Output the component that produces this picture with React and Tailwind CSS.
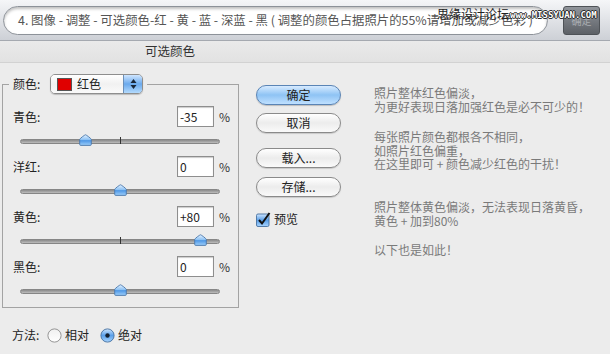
import React from "react";

const F = "font-['Noto_Sans_CJK_SC','Noto_Sans',sans-serif]";

function Thumb({ left }) {
  return (
    <svg
      className="absolute top-[-1px]"
      style={{ left }}
      width="13"
      height="12"
      viewBox="0 0 13 12"
    >
      <defs>
        <linearGradient id="tg" x1="0" y1="0" x2="0" y2="1">
          <stop offset="0" stopColor="#e4f2ff" />
          <stop offset="0.45" stopColor="#8fc3f5" />
          <stop offset="0.55" stopColor="#4f98e6" />
          <stop offset="1" stopColor="#9fd0fb" />
        </linearGradient>
      </defs>
      <path
        d="M6.5 0.8 C7.2 0.8 12.3 4.6 12.3 5.4 V10.4 Q12.3 11.4 11.3 11.4 H1.7 Q0.7 11.4 0.7 10.4 V5.4 C0.7 4.6 5.8 0.8 6.5 0.8Z"
        fill="url(#tg)"
        stroke="#4a77aa"
        strokeWidth="0.9"
      />
    </svg>
  );
}

function Slider({ value }) {
  return (
    <div className="relative ml-[17px] mt-[8px] flex h-[12px] w-[200px] items-center">
      <div className="h-[5px] w-full rounded-full border border-[#868686] bg-linear-to-b from-[#8a8a8a] to-[#bdbdbd]" />
      <div className="absolute left-[100px] top-[2px] h-[7px] w-px bg-[#333]" />
      <Thumb left={100 + value - 6.5} />
    </div>
  );
}

function Item({ label, value, num, first }) {
  return (
    <div className={first ? "mt-[12px]" : "mt-[9px]"}>
      <div className="flex h-[21px] items-center pl-[10px]">
        <span className="flex-1 text-[12px] text-[#222]">{label}</span>
        <div className="flex h-[21px] w-[37px] items-center border border-[#8e8e8e] bg-white pl-[2px] text-[12px] text-[#222] shadow-[inset_0_1px_1px_rgba(0,0,0,0.2)]">
          {value}
        </div>
        <span className="ml-[5px] mr-[8px] text-[12px] text-[#333]">%</span>
      </div>
      <Slider value={num} />
    </div>
  );
}

function AquaButton({ children, primary }) {
  return (
    <div
      className={
        "flex h-[20px] w-[85px] items-center justify-center rounded-full border text-[12px] text-[#222] " +
        (primary
          ? "border-[#5a84b5] bg-linear-to-b from-[#d7ebff] via-[#8ec3f4] to-[#bfe0ff] shadow-[0_1px_1px_rgba(0,0,0,0.2)]"
          : "border-[#8a8a8a] bg-linear-to-b from-[#ffffff] via-[#ececec] to-[#fafafa] shadow-[0_1px_1px_rgba(0,0,0,0.15)]")
      }
    >
      {children}
    </div>
  );
}

function Radio({ on }) {
  return (
    <svg width="15" height="15" viewBox="0 0 15 15">
      <defs>
        <linearGradient id="rb" x1="0" y1="0" x2="0" y2="1">
          <stop offset="0" stopColor="#cfe6ff" />
          <stop offset="0.5" stopColor="#5a9fe8" />
          <stop offset="1" stopColor="#a9d5ff" />
        </linearGradient>
        <linearGradient id="rw" x1="0" y1="0" x2="0" y2="1">
          <stop offset="0" stopColor="#f0f0f0" />
          <stop offset="1" stopColor="#ffffff" />
        </linearGradient>
      </defs>
      <circle
        cx="7.5"
        cy="7.5"
        r="6.6"
        fill={on ? "url(#rb)" : "url(#rw)"}
        stroke={on ? "#46719f" : "#8a8a8a"}
        strokeWidth="0.9"
      />
      {on && <circle cx="7.5" cy="7.5" r="2.2" fill="#14202e" />}
    </svg>
  );
}

export default function App() {
  return (
    <div className={"relative h-[354px] w-[610px] overflow-hidden bg-[#ececec] " + F}>
      {/* top bar */}
      <div className="flex h-[41px] items-center border-b border-[#a5a9b0] bg-linear-to-b from-[#f5f6f8] to-[#cdd0d6]">
        <div className="ml-[3px] flex h-[29px] w-[545px] items-center overflow-hidden whitespace-nowrap rounded-full border border-[#8d9299] bg-white pl-[14px] text-[12.4px] text-[#555] shadow-[inset_0_2px_3px_rgba(0,0,0,0.25)]">
          4. 图像 - 调整 - 可选颜色-红 - 黄 - 蓝 - 深蓝 - 黑 ( 调整的颜色占据照片的55%请增加或减少色彩 )
        </div>
        <div className="ml-auto mr-[10px] flex h-[29px] w-[37px] items-center justify-center rounded-[3px] border border-[#4e5257] bg-linear-to-b from-[#90949a] to-[#5d6167] text-[10px] text-[#a9adb2]">
          确定
        </div>
      </div>
      {/* watermark over the top bar */}
      <div className="absolute left-[437px] top-[6px] flex items-end whitespace-nowrap">
        <span className="text-[12px] leading-[15px] text-[#222]">思缘设计论坛</span>
        <span className="ml-[1px] font-['DejaVu_Sans_Mono',monospace] text-[9px] font-bold leading-[12px] text-white [text-shadow:0_0_1px_#000,1px_0_0_#333,-1px_0_0_#333,0_1px_0_#333,0_-1px_0_#333]">
          www.MISSYUAN.COM
        </span>
      </div>
      {/* title */}
      <div className="flex h-[22px] items-center border-b border-[#d2d2d2] bg-linear-to-b from-[#eaeaea] to-[#e2e2e2] pl-[145px] text-[12.5px] text-[#333]">
        可选颜色
      </div>
      {/* body */}
      <div className="flex">
        <div className="w-[239px]">
          <fieldset className="ml-[2px] mt-[11px] w-[237px] border border-[#a3a3a3] pb-[10px]">
            <legend className="ml-[6px] px-[4px]">
              <div className="flex h-[20px] items-center">
                <span className="w-[37px] text-[12px] text-[#222]">颜色:</span>
                <div className="flex h-[20px] w-[93px] overflow-hidden rounded-[5px] border border-[#8e8e8e] shadow-[0_1px_1px_rgba(0,0,0,0.2)]">
                  <div className="flex flex-1 items-center bg-linear-to-b from-white via-[#f1f1f1] to-[#fafafa] pl-[6px]">
                    <div className="h-[13px] w-[15px] border border-[#555] bg-[#e00000]" />
                    <span className="ml-[5px] text-[12px] text-[#222]">红色</span>
                  </div>
                  <div className="flex w-[19px] items-center justify-center border-l border-[#6b8fb8] bg-linear-to-b from-[#cfe6ff] via-[#6aa9ec] to-[#b3dafd]">
                    <svg width="7" height="12" viewBox="0 0 7 12">
                      <path d="M3.5 1 L6.5 5 H0.5Z M3.5 11 L6.5 7 H0.5Z" fill="#1a2636" />
                    </svg>
                  </div>
                </div>
              </div>
            </legend>
            <Item first label="青色:" value="-35" num={-35} />
            <Item label="洋红:" value="0" num={0} />
            <Item label="黄色:" value="+80" num={80} />
            <Item label="黑色:" value="0" num={0} />
          </fieldset>
          <div className="mt-[19px] flex h-[16px] items-center pl-[12px] text-[12px] text-[#222]">
            <span className="w-[35px]">方法:</span>
            <Radio on={false} />
            <span className="ml-[3px] w-[35px]">相对</span>
            <Radio on={true} />
            <span className="ml-[3px]">绝对</span>
          </div>
        </div>
        <div className="ml-[17px] mt-[22px] flex w-[85px] flex-col">
          <AquaButton primary>确定</AquaButton>
          <div className="mt-[8px]">
            <AquaButton>取消</AquaButton>
          </div>
          <div className="mt-[15px]">
            <AquaButton>载入...</AquaButton>
          </div>
          <div className="mt-[9px]">
            <AquaButton>存储...</AquaButton>
          </div>
          <div className="mt-[13px] flex items-center">
            <svg width="15" height="15" viewBox="0 0 15 15">
              <defs>
                <linearGradient id="cb" x1="0" y1="0" x2="0" y2="1">
                  <stop offset="0" stopColor="#cfe6ff" />
                  <stop offset="0.5" stopColor="#5a9fe8" />
                  <stop offset="1" stopColor="#a9d5ff" />
                </linearGradient>
              </defs>
              <rect x="0.5" y="2" width="12.5" height="12.5" rx="1.5" fill="url(#cb)" stroke="#46719f" strokeWidth="0.9" />
              <path d="M3 8 L6 11.5 L13.5 1" fill="none" stroke="#111" strokeWidth="2" />
            </svg>
            <span className="ml-[3px] text-[12px] text-[#222]">预览</span>
          </div>
        </div>
        <div className="ml-[33px] mt-[23px] text-[12px] leading-[13.5px] text-[#7a7a7a]">
          <p>照片整体红色偏淡，</p>
          <p>为更好表现日落加强红色是必不可少的！</p>
          <p className="mt-[17px]">每张照片颜色都根各不相同，</p>
          <p>如照片红色偏重，</p>
          <p>在这里即可 + 颜色减少红色的干扰！</p>
          <p className="mt-[29.5px]">照片整体黄色偏淡，无法表现日落黄昏，</p>
          <p>黄色 + 加到80%</p>
          <p className="mt-[16px]">以下也是如此！</p>
        </div>
      </div>
    </div>
  );
}
